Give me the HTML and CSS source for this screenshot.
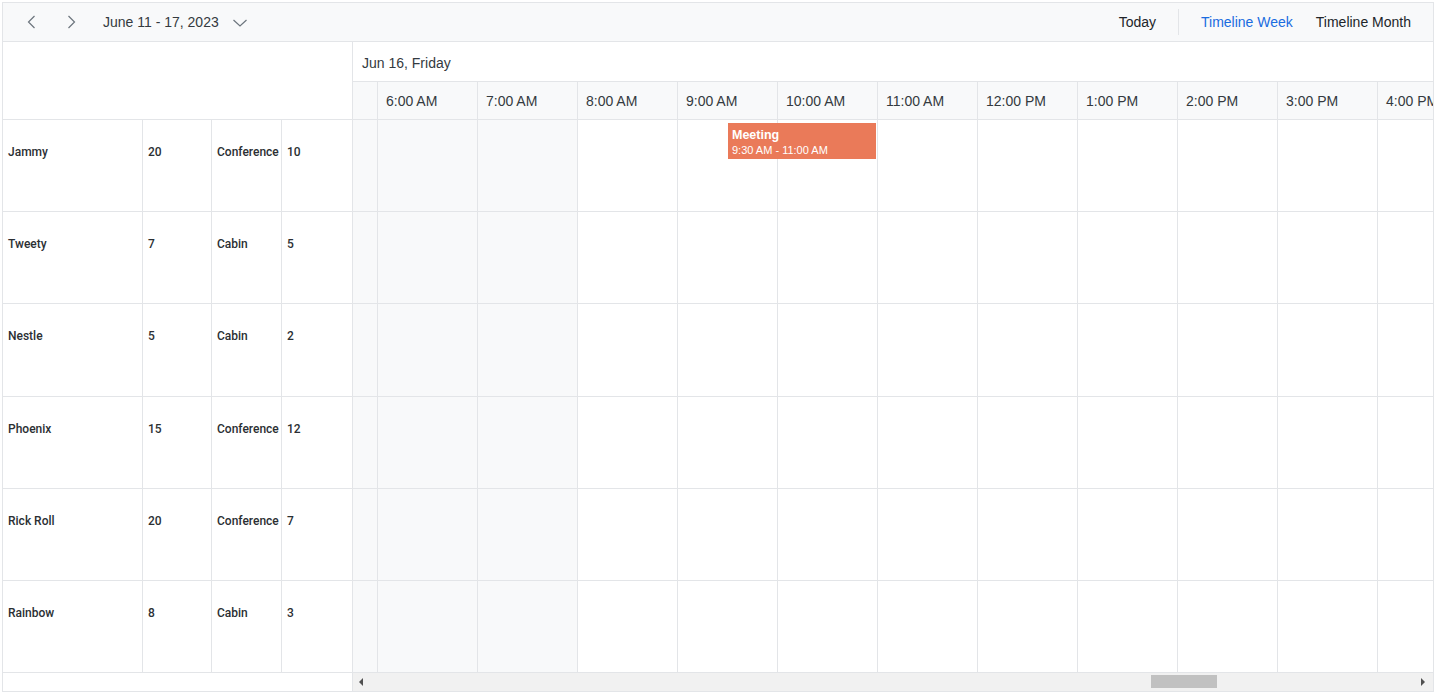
FILE: index.html
```html
<!DOCTYPE html>
<html lang="en">
<head>
    <meta charset="UTF-8">
    <title>Timeline Scheduler</title>
    <link rel="stylesheet" href="styles.css">
</head>
<body>
    <div class="scheduler">
        <div class="toolbar">
            <div class="toolbar-left">
                <button class="icon-btn" aria-label="Previous">
                    <svg width="16" height="16" viewBox="0 0 16 16"><path d="M10.5 2 L4.5 8 L10.5 14" fill="none" stroke="#6c757d" stroke-width="1.2"/></svg>
                </button>
                <button class="icon-btn" aria-label="Next">
                    <svg width="16" height="16" viewBox="0 0 16 16"><path d="M5.5 2 L11.5 8 L5.5 14" fill="none" stroke="#6c757d" stroke-width="1.2"/></svg>
                </button>
                <span class="date-range">June 11 - 17, 2023</span>
                <svg class="chevron" width="16" height="16" viewBox="0 0 16 16"><path d="M1.5 5 L8 11 L14.5 5" fill="none" stroke="#6c757d" stroke-width="1.2"/></svg>
            </div>
            <div class="toolbar-right">
                <span class="tb-item">Today</span>
                <span class="tb-sep"></span>
                <span class="tb-item active">Timeline Week</span>
                <span class="tb-item">Timeline Month</span>
            </div>
        </div>

        <div class="main">
            <div class="resources">
                <div class="res-header"></div>
                <div class="res-row"><div class="c name">Jammy</div><div class="c n1">20</div><div class="c type">Conference</div><div class="c n2">10</div></div>
                <div class="res-row"><div class="c name">Tweety</div><div class="c n1">7</div><div class="c type">Cabin</div><div class="c n2">5</div></div>
                <div class="res-row tall"><div class="c name">Nestle</div><div class="c n1">5</div><div class="c type">Cabin</div><div class="c n2">2</div></div>
                <div class="res-row"><div class="c name">Phoenix</div><div class="c n1">15</div><div class="c type">Conference</div><div class="c n2">12</div></div>
                <div class="res-row"><div class="c name">Rick Roll</div><div class="c n1">20</div><div class="c type">Conference</div><div class="c n2">7</div></div>
                <div class="res-row"><div class="c name">Rainbow</div><div class="c n1">8</div><div class="c type">Cabin</div><div class="c n2">3</div></div>
                <div class="res-footer"></div>
            </div>

            <div class="timeline">
                <div class="date-header">Jun 16, Friday</div>
                <div class="time-header">
                    <div class="t first"></div>
                    <div class="t">6:00 AM</div>
                    <div class="t">7:00 AM</div>
                    <div class="t">8:00 AM</div>
                    <div class="t">9:00 AM</div>
                    <div class="t">10:00 AM</div>
                    <div class="t">11:00 AM</div>
                    <div class="t">12:00 PM</div>
                    <div class="t">1:00 PM</div>
                    <div class="t">2:00 PM</div>
                    <div class="t">3:00 PM</div>
                    <div class="t">4:00 PM</div>
                </div>
                <div class="rows" id="rows"></div>
                <div class="hscroll">
                    <span class="arrow left"></span>
                    <span class="thumb"></span>
                    <span class="arrow right"></span>
                </div>
            </div>
        </div>
    </div>
    <script>
        const rows = document.getElementById('rows');
        const offHours = 3;

        for (let r = 0; r < 6; r++) {
            const row = document.createElement('div');
            row.className = 'row' + (r === 2 ? ' tall' : '');
            for (let c = 0; c < 12; c++) {
                const cell = document.createElement('div');
                cell.className = 'cell' + (c === 0 ? ' first' : '') + (c < offHours ? ' off' : '');
                row.appendChild(cell);
            }
            if (r === 0) {
                const ev = document.createElement('div');
                ev.className = 'event';
                ev.innerHTML = '<div class="ev-title">Meeting</div><div class="ev-time">9:30 AM - 11:00 AM</div>';
                row.appendChild(ev);
            }
            rows.appendChild(row);
        }
    </script>
</body>
</html>
```

FILE: styles.css
```css
* {
    margin: 0;
    padding: 0;
    box-sizing: border-box;
}

body {
    font-family: 'Liberation Sans', Arial, sans-serif;
    color: #212529;
    background: #fff;
    padding: 2px;
}

.scheduler {
    width: 1432px;
    height: 690px;
    border: 1px solid #e3e5e8;
    display: flex;
    flex-direction: column;
    overflow: hidden;
}

/* Toolbar */
.toolbar {
    height: 39px;
    flex: none;
    background: #f8f9fa;
    border-bottom: 1px solid #e3e5e8;
    display: flex;
    justify-content: space-between;
    align-items: center;
    font-size: 14px;
}

.toolbar-left {
    display: flex;
    align-items: center;
    padding-left: 17px;
}

.icon-btn {
    border: none;
    background: none;
    width: 24px;
    height: 24px;
    display: flex;
    align-items: center;
    justify-content: center;
    margin-right: 15px;
}

.date-range {
    margin-left: 5px;
    color: #343a40;
}

.chevron {
    margin-left: 13px;
    margin-top: 2px;
}

.toolbar-right {
    display: flex;
    align-items: center;
    padding-right: 22px;
}

.tb-item {
    color: #212529;
}

.tb-item.active {
    color: #1a6ce0;
    margin-right: 23px;
}

.tb-sep {
    width: 1px;
    height: 26px;
    background: #e3e5e8;
    margin: 0 22px;
}

/* Main area */
.main {
    flex: 1;
    display: flex;
    min-height: 0;
}

.resources {
    width: 350px;
    flex: none;
    border-right: 1px solid #e3e5e8;
    display: flex;
    flex-direction: column;
}

.res-header {
    height: 78px;
    border-bottom: 1px solid #e3e5e8;
}

.res-row {
    height: 92px;
    display: grid;
    grid-template-columns: 140px 69px 70px 1fr;
    border-bottom: 1px solid #e3e5e8;
    font-family: Roboto, 'Liberation Sans', sans-serif;
    font-size: 12px;
    font-weight: 500;
    color: #2b2f33;
}

.res-row.tall,
.row.tall {
    height: 93px;
}

.res-row .c {
    padding: 25px 5px 0 5px;
    border-right: 1px solid #e3e5e8;
}

.res-row .c:last-child {
    border-right: none;
}

.res-footer {
    flex: 1;
}

/* Timeline */
.timeline {
    flex: 1;
    display: flex;
    flex-direction: column;
    overflow: hidden;
    min-width: 0;
}

.date-header {
    height: 40px;
    flex: none;
    padding-left: 9px;
    padding-top: 2px;
    display: flex;
    align-items: center;
    font-size: 14px;
    color: #343a40;
    border-bottom: 1px solid #e3e5e8;
}

.time-header {
    height: 38px;
    flex: none;
    display: flex;
    background: #f8f9fa;
    border-bottom: 1px solid #e3e5e8;
}

.time-header .t {
    width: 100px;
    flex: none;
    padding-left: 8px;
    display: flex;
    align-items: center;
    font-size: 14px;
    color: #343a40;
    border-right: 1px solid #e3e5e8;
    white-space: nowrap;
}

.time-header .t.first,
.cell.first {
    width: 25px;
}

.rows {
    flex: none;
}

.row {
    position: relative;
    height: 92px;
    display: flex;
    border-bottom: 1px solid #e3e5e8;
}

.cell {
    width: 100px;
    flex: none;
    border-right: 1px solid #e3e5e8;
}

.cell.off {
    background: #f8f9fa;
}

.event {
    position: absolute;
    left: 375px;
    top: 3px;
    width: 148px;
    height: 36px;
    background: #ea7a59;
    color: #fff;
    padding: 5px 4px 0 4px;
}

.ev-title {
    font-size: 12.5px;
    font-weight: bold;
    line-height: 15px;
}

.ev-time {
    font-size: 11px;
    line-height: 14px;
}

/* Fake horizontal scrollbar */
.hscroll {
    flex: 1;
    background: #f1f1f1;
    position: relative;
}

.hscroll .thumb {
    position: absolute;
    left: 798px;
    top: 2px;
    width: 66px;
    height: 13px;
    background: #c1c1c1;
}

.hscroll .arrow {
    position: absolute;
    top: 5px;
    width: 0;
    height: 0;
    border-top: 4px solid transparent;
    border-bottom: 4px solid transparent;
}

.hscroll .arrow.left {
    left: 6px;
    border-right: 4px solid #505050;
}

.hscroll .arrow.right {
    right: 8px;
    border-left: 4px solid #505050;
}
```
